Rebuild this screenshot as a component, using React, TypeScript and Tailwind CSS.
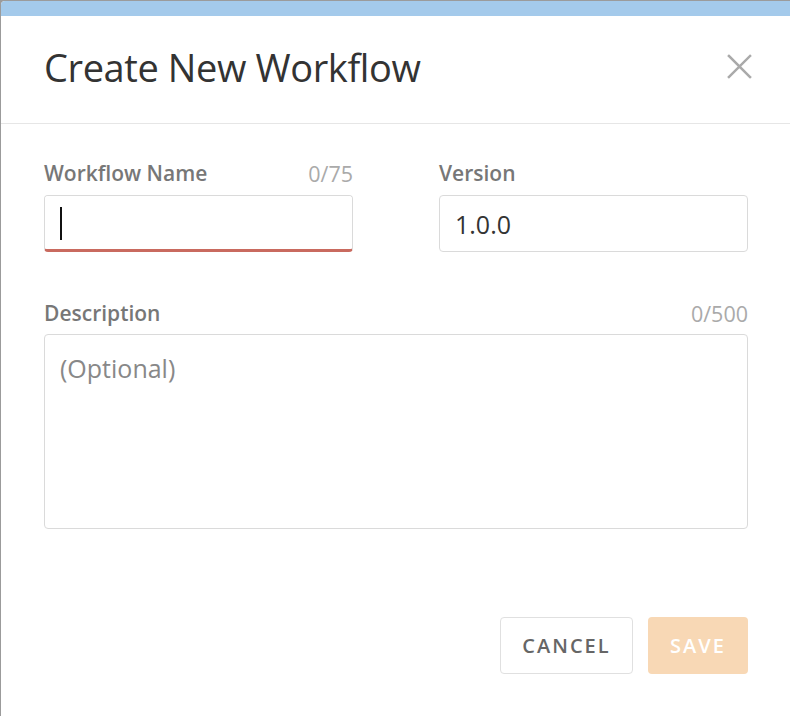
import { useState } from 'react';

export default function App() {
  const [name, setName] = useState('');
  const [version, setVersion] = useState('1.0.0');
  const [desc, setDesc] = useState('');

  return (
    <div className="w-[790px] h-[716px] bg-[#9b9b9b] pt-px pl-px overflow-hidden" style={{ fontFamily: '"Open Sans", "Noto Sans", sans-serif' }}>
      <div className="h-full w-[800px] bg-white rounded-tl-[4px] overflow-hidden flex flex-col">
        <div className="h-[15px] bg-[#a4caeb] shrink-0" />

        {/* header */}
        <div className="h-[108px] w-[789px] border-b border-[#e6e6e6] flex items-center justify-between pl-[43px] pr-[37px] shrink-0">
          <h1 className="text-[38px] text-[#333] tracking-[-0.4px] mt-[-4px]">Create New Workflow</h1>
          <button className="w-[28px] h-[28px] flex items-center justify-center text-[#aaa] mt-[-6px]">
            <svg width="25" height="25" viewBox="0 0 26 26" fill="none" stroke="currentColor" strokeWidth="2.6" strokeLinecap="square">
              <path d="M2 2 L24 24 M24 2 L2 24" />
            </svg>
          </button>
        </div>

        {/* body */}
        <div className="w-[789px] pl-[43px] pr-[42px] pt-[36px] flex flex-col">
          <div className="grid grid-cols-[309px_309px] gap-x-[86px]">
            <div className="flex flex-col">
              <div className="flex items-center justify-between h-[28px] mb-[7px]">
                <span className="text-[21px] font-semibold text-[#777]">Workflow Name</span>
                <span className="text-[21.5px] text-[#aaa]">0/75</span>
              </div>
              <div className="relative h-[57px] rounded-[4px] border border-[#dadada] border-b-[3px] border-b-[#c96a5f] overflow-hidden">
                <input
                  value={name}
                  onChange={(e) => setName(e.target.value)}
                  className="w-full h-full px-[15px] text-[25px] text-[#333] outline-none bg-white"
                />
                {name === '' && <span className="absolute left-[15px] top-[11px] w-[2px] h-[33px] bg-[#111]" />}
              </div>
            </div>
            <div className="flex flex-col">
              <div className="flex items-center h-[28px] mb-[7px]">
                <span className="text-[21px] font-semibold text-[#777]">Version</span>
              </div>
              <input
                value={version}
                onChange={(e) => setVersion(e.target.value)}
                className="h-[57px] rounded-[4px] border border-[#dadada] px-[15px] text-[25px] text-[#333] outline-none"
              />
            </div>
          </div>

          <div className="flex items-center justify-between h-[28px] mt-[48px] mb-[6px]">
            <span className="text-[21px] font-semibold text-[#777]">Description</span>
            <span className="text-[21.5px] text-[#aaa]">0/500</span>
          </div>
          <textarea
            value={desc}
            onChange={(e) => setDesc(e.target.value)}
            placeholder="(Optional)"
            className="h-[195px] w-[704px] resize-none rounded-[4px] border border-[#dadada] px-[15px] py-[15px] text-[25px] text-[#333] placeholder:text-[#888] outline-none"
          />

          <div className="flex justify-end gap-[15px] mt-[88px]">
            <button className="h-[57px] w-[133px] rounded-[4px] border border-[#e0e0e0] bg-white text-[20px] font-semibold tracking-[2px] text-[#666]">
              CANCEL
            </button>
            <button className="h-[57px] w-[100px] rounded-[4px] bg-[#f8d8b5] text-[20px] font-semibold tracking-[2px] text-white">
              SAVE
            </button>
          </div>
        </div>
      </div>
    </div>
  );
}
